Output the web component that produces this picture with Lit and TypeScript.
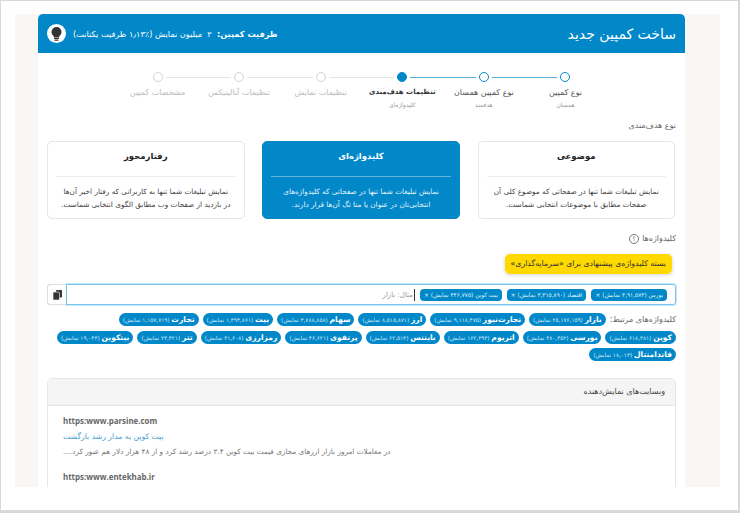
import { LitElement, html, css } from "lit";
import { customElement } from "lit/decorators.js";

const steps = [
  { t: "نوع کمپین", s: "همسان", st: "done" },
  { t: "نوع کمپین همسان", s: "هدفمند", st: "done" },
  { t: "تنظیمات هدف‌مندی", s: "کلیدواژه‌ای", st: "cur" },
  { t: "تنظیمات نمایش", s: "", st: "" },
  { t: "تنظیمات آنالیتیکس", s: "", st: "" },
  { t: "مشخصات کمپین", s: "", st: "" },
];
const cards = [
  { t: "موضوعی", d: "نمایش تبلیغات شما تنها در صفحاتی که موضوع کلی آن\nصفحات مطابق با موضوعات انتخابی شماست.", on: false },
  { t: "کلیدواژه‌ای", d: "نمایش تبلیغات شما تنها در صفحاتی که کلیدواژه‌های\nانتخابی‌تان در عنوان یا متا تگ آن‌ها قرار دارند.", on: true },
  { t: "رفتارمحور", d: "نمایش تبلیغات شما تنها به کاربراتی که رفتار اخیر آن‌ها\nدر بازدید از صفحات وب مطابق الگوی انتخابی شماست.", on: false },
];
const tags = ["بورس (۴,۹۱,۵۷۳ نمایش)", "اقتصاد (۳,۳۱۵,۸۹۰ نمایش)", "بیت کوین (۴۴۶,۷۷۵ نمایش)"];
const related: [string, string][] = [
  ["بازار", "۲۵,۱۷۶,۱۵۹"], ["تجارت‌نیوز", "۹,۱۱۸,۴۷۵"], ["ارز", "۸,۵۱۵,۸۷۱"], ["سهام", "۳,۷۸۸,۸۵۸"], ["بیت", "۱,۳۹۴,۸۶۱"], ["تجارت", "۱,۱۵۷,۷۱۹"],
  ["کوین", "۶۱۸,۴۸۱"], ["بورسی", "۴۸۰,۴۵۲"], ["اتریوم", "۱۶۲,۳۹۳"], ["بایننس", "۶۲,۵۱۳"], ["پرتفوی", "۴۶,۶۲۱"], ["رمزارزی", "۴۱,۶۰۸"], ["تتر", "۲۳,۴۲۱"], ["بیتکوین", "۱۹,۰۴۴"],
  ["فاندامنتال", "۱۸,۰۱۳"],
];

@customElement("app-root")
export class AppRoot extends LitElement {
  static styles = css`
    :host { display: block; width: 740px; height: 513px; overflow: hidden; font-family: "DejaVu Sans", "Noto Sans", sans-serif; }
    * { box-sizing: border-box; }
    .frame { height: 513px; background: #fff; border: solid #d9d9d9; border-width: 1px 2px 3px 1px; padding: 13px 18px 23px 14px; }
    .stage { height: 473px; background: #f8f7f4; padding: 0 35px 0 23px; }
    .main { height: 473px; background: #fff; overflow: hidden; direction: rtl; border-radius: 5px 5px 0 0; }
    .head { height: 39px; background: #0288c9; color: #fff; display: flex; align-items: center; justify-content: space-between; padding: 0 9px; }
    .title { font-size: 14px; font-weight: 500; }
    .cap { display: flex; align-items: center; gap: 7px; font-size: 8.2px; white-space: nowrap; }
    .cap b { font-weight: 700; }
    .bulb { width: 19px; height: 19px; border-radius: 50%; background: #fff; display: flex; align-items: center; justify-content: center; }
    .stepper { display: grid; grid-template-columns: repeat(6, 81.6px); justify-content: center; padding-top: 19px; height: 67px; }
    .step { display: flex; flex-direction: column; align-items: center; }
    .track { display: flex; align-items: center; width: 100%; gap: 3px; height: 10px; }
    .ln { flex: 1; height: 1px; background: #e4e4e4; }
    .ln.blue { background: #5aaedb; }
    .ln.none { background: transparent; }
    .dot { width: 10px; height: 10px; border-radius: 50%; border: 1px solid #d4d4d4; background: #fff; flex: none; }
    .done .dot { border-color: #0288c9; border-width: 1.5px; }
    .cur .dot { background: #0288c9; border-color: #0288c9; }
    .st { font-size: 8px; color: #bdbdbd; margin-top: 5px; line-height: 11px; white-space: nowrap; }
    .done .st { color: #555; }
    .cur .st { color: #333; font-weight: 700; font-size: 7px; }
    .sub { font-size: 6px; color: #999; margin-top: 2px; line-height: 9px; }
    .body { padding: 0 9px 0 9px; }
    .lbl { font-size: 8px; color: #666; line-height: 11px; }
    .cards { display: grid; grid-template-columns: repeat(3, 197.5px); justify-content: space-between; margin-top: 10px; padding-right: 1px; }
    .card { height: 78px; border: 1px solid #e6e6e6; border-radius: 5px; padding: 0 8px; text-align: center; color: #444; background: #fff; }
    .card.on { background: #0288c9; border-color: #0288c9; color: #e4f3fb; }
    .card h4 { margin: 0; height: 35px; line-height: 29px; font-size: 8.5px; font-weight: 700; color: #222; border-bottom: 1px solid #eee; }
    .card.on h4 { color: #fff; border-color: #69b5de; }
    .card p { margin: 8px 0 0; font-size: 7.3px; line-height: 13px; white-space: pre-line; }
    .kwl { display: flex; align-items: center; gap: 3px; margin-top: 14px; }
    .q { width: 10px; height: 10px; border: 1px solid #777; border-radius: 50%; font-size: 6px; line-height: 8px; text-align: center; color: #666; }
    .sug { margin: 10px 4px 0 0; width: fit-content; height: 20px; padding: 0 6px; line-height: 20px; background: #ffd900; border-radius: 5px; font-size: 7.8px; color: #333; box-shadow: 0 1px 4px rgba(0,0,0,.18); white-space: nowrap; }
    .inp { display: flex; height: 21px; margin-top: 10px; }
    .box { flex: 1; border: 1px solid #78c4ee; box-shadow: 0 0 0 1px #c4e8fb; display: flex; align-items: center; gap: 5px; padding: 0 8px; border-radius: 0 3px 3px 0; }
    .tag { height: 12px; line-height: 12px; background: #0288c9; color: #dff1fb; border-radius: 4px; font-size: 5.8px; padding: 0 4px; white-space: nowrap; }
    .ph { font-size: 7px; color: #999; border-right: 1px solid #333; padding-right: 1px; line-height: 12px; }
    .copy { width: 19px; border: 1px solid #ddd; border-right: 0; border-top-left-radius: 3px; border-bottom-left-radius: 3px; display: flex; align-items: center; justify-content: center; background: #fff; order: 2; }
    .rel { margin-top: 8px; display: flex; flex-wrap: wrap; align-items: center; gap: 4.5px 4px; }
    .chip { height: 13px; line-height: 13px; background: #0288c9; color: #cfe9f8; border-radius: 7px; padding: 0 4px; font-size: 5.7px; white-space: nowrap; }
    .chip b { color: #fff; font-size: 7.6px; font-weight: 700; }
    .panel { margin-top: 17px; border: 1px solid #e6e6e6; border-radius: 5px 5px 0 0; }
    .ph2 { height: 27px; line-height: 26px; background: #f5f5f5; border-bottom: 1px solid #e4e4e4; font-size: 8px; color: #444; padding-right: 10px; }
    .pb { padding: 8px 15px; direction: ltr; display: flex; flex-direction: column; align-items: flex-start; }
    .url { font-family: "Open Sans", sans-serif; font-weight: 700; font-size: 7.9px; color: #666; line-height: 15px; }
    .lk { direction: rtl; font-size: 7.7px; color: #4a9fd0; line-height: 15px; }
    .ds { direction: rtl; font-size: 7.3px; color: #777; line-height: 15px; margin-bottom: 11px; white-space: nowrap; }
  `;

  render() {
    return html`<div class="frame"><div class="stage"><div class="main">
      <div class="head">
        <div class="title">ساخت کمپین جدید</div>
        <div class="cap">
          <span><b>ظرفیت کمپین:</b>&nbsp; ۲ &nbsp;میلیون نمایش (٪۱٫۱۳ ظرفیت یکتانت)</span>
          <span class="bulb"><svg width="11" height="14" viewBox="0 0 11 14"><path fill="#333" d="M5.5 0a5 5 0 0 0-5 5c0 1.8 1 2.8 1.8 3.8.4.5.7 1 .7 1.7h5c0-.7.3-1.2.7-1.7C9.5 7.8 10.5 6.8 10.5 5a5 5 0 0 0-5-5z"/><rect x="3" y="11" width="5" height="1" fill="#333"/><rect x="3.5" y="12.5" width="4" height="1.3" rx=".6" fill="#333"/></svg></span>
        </div>
      </div>
      <div class="stepper">
        ${steps.map((s, i) => html`<div class="step ${s.st}">
          <div class="track">
            <span class="ln ${i === 0 ? "none" : s.st ? "blue" : ""}"></span>
            <span class="dot"></span>
            <span class="ln ${i === 5 ? "none" : s.st === "done" ? "blue" : ""}"></span>
          </div>
          <div class="st">${s.t}</div>
          ${s.s ? html`<div class="sub">${s.s}</div>` : ""}
        </div>`)}
      </div>
      <div class="body">
        <div class="lbl">نوع هدف‌مندی</div>
        <div class="cards">
          ${cards.map((c) => html`<div class="card ${c.on ? "on" : ""}"><h4>${c.t}</h4><p>${c.d}</p></div>`)}
        </div>
        <div class="kwl lbl"><span>کلیدواژه‌ها</span><span class="q">؟</span></div>
        <div class="sug">بسته کلیدواژه‌ی پیشنهادی برای «سرمایه‌گذاری»</div>
        <div class="inp">
          <div class="box">
            ${tags.map((t) => html`<span class="tag">${t} ×</span>`)}
            <span class="ph">مثال: بازار</span>
          </div>
          <div class="copy"><svg width="9" height="10" viewBox="0 0 9 10"><rect x="3" y="0" width="6" height="7.5" rx=".8" fill="#333"/><rect x="0" y="2" width="6.5" height="8" rx=".8" fill="#333" stroke="#fff" stroke-width=".6"/></svg></div>
        </div>
        <div class="rel">
          <span class="lbl">کلیدواژه‌های مرتبط:</span>
          ${related.map(([k, n]) => html`<span class="chip"><b>${k}</b> (${n} نمایش)</span>`)}
        </div>
        <div class="panel">
          <div class="ph2">وبسایت‌های نمایش‌دهنده</div>
          <div class="pb">
            <div class="url">https:www.parsine.com</div>
            <div class="lk">بیت کوین به مدار رشد بازگشت</div>
            <div class="ds">در معاملات امروز بازار ارزهای مجازی قیمت بیت کوین ۳.۴ درصد رشد کرد و از ۴۸ هزار دلار هم عبور کرد....</div>
            <div class="url">https:www.entekhab.ir</div>
          </div>
        </div>
      </div>
    </div></div></div>`;
  }
}
